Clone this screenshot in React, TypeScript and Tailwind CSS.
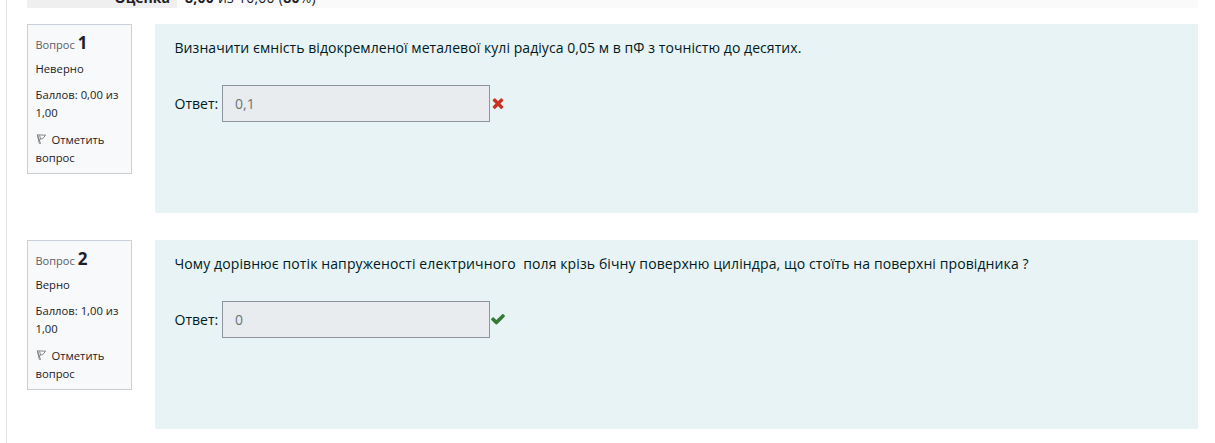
type Question = {
  number: number;
  state: string;
  grade: string;
  text: string;
  tracking: string;
  answer: string;
  correct: boolean;
};

const questions: Question[] = [
  {
    number: 1,
    state: "Неверно",
    grade: "0,00",
    text: "Визначити ємність відокремленої металевої кулі радіуса 0,05 м в пФ з точністю до десятих.",
    tracking: "tracking-[0.06px]",
    answer: "0,1",
    correct: false,
  },
  {
    number: 2,
    state: "Верно",
    grade: "1,00",
    text: "Чому дорівнює потік напруженості електричного\u00a0 поля крізь бічну поверхню циліндра, що стоїть на поверхні провідника ?",
    tracking: "tracking-[0.1px]",
    answer: "0",
    correct: true,
  },
];

function CheckIcon() {
  return (
    <svg viewBox="0 0 1792 1792" className="-mt-px size-4 shrink-0 fill-[#357a32]">
      <path d="M1671 566q0 40-28 68l-724 724-136 136q-28 28-68 28t-68-28l-136-136-362-362q-28-28-28-68t28-68l136-136q28-28 68-28t68 28l294 295 656-657q28-28 68-28t68 28l136 136q28 28 28 68z" />
    </svg>
  );
}

function CrossIcon() {
  return (
    <svg viewBox="0 0 1792 1792" className="-mt-px size-4 shrink-0 fill-[#ca3120]">
      <path d="M1490 1322q0 40-28 68l-136 136q-28 28-68 28t-68-28l-294-294-294 294q-28 28-68 28t-68-28l-136-136q-28-28-28-68t28-68l294-294-294-294q-28-28-28-68t28-68l136-136q28-28 68-28t68 28l294 294 294-294q28-28 68-28t68 28l136 136q28 28 28 68t-28 68l-294 294 294 294q28 28 28 68z" />
    </svg>
  );
}

function FlagIcon() {
  return (
    <svg
      viewBox="0 0 12 12"
      className="mr-1 inline-block size-3 align-[-1px] fill-none stroke-[#777]"
      strokeWidth="0.9"
    >
      <path d="M1.4 1.8 4.6 10.8M3.4 10.8 1.4 1.8 9.6 2.2 6.8 5.6 3.2 6.4M3.6 2.4 4.6 5.8" />
    </svg>
  );
}

function QuestionRow({ q }: { q: Question }) {
  return (
    <div className="flex h-[189px] items-start gap-[23px]">
      <div className="h-[150px] w-[105px] shrink-0 border border-[#cad0d7] bg-[#f8f9fa] pt-[7px] pr-2 pl-[7.5px] text-[11.25px] leading-[18px] text-[#1d2125]">
        <h3 className="flex h-6 items-baseline gap-[3px] whitespace-nowrap text-[11px] leading-[22px] text-[#5a6168]">
          <span>Вопрос</span>
          <span className="text-[17px] font-bold text-[#1d2125]">{q.number}</span>
        </h3>
        <div className="mt-1">{q.state}</div>
        <div className="mt-2">
          Баллов: {q.grade} из
          <br />
          1,00
        </div>
        <div className="mt-[9px]">
          <FlagIcon />
          Отметить
          <br />
          вопрос
        </div>
      </div>
      <div className="h-full flex-1 bg-[#e7f3f5] pt-3 pr-5 pl-[19.5px] text-[14px] text-[#001a1e]">
        <p className={`h-6 whitespace-pre leading-6 ${q.tracking}`}>{q.text}</p>
        <div className="mt-[25px] flex h-[37px] items-center">
          <label className="w-[47.5px] whitespace-nowrap">Ответ:</label>
          <div className="flex h-[37px] w-[268px] items-center border border-[#8f959e] bg-[#e9ecef] px-3 text-[#6a737b]">
            {q.answer}
          </div>
          {q.correct ? <CheckIcon /> : <CrossIcon />}
        </div>
      </div>
    </div>
  );
}

export default function App() {
  return (
    <div className="h-[443px] overflow-hidden bg-white pl-1.5 font-['Open_Sans',sans-serif]">
      <div className="h-full border-l border-[#dee2e6] pr-[17px] pl-5">
        <div className="flex h-2 items-end text-[14px] leading-5 text-[#1d2125]">
          <div className="flex h-2 w-[150px] items-end justify-end bg-[#efefef] pr-[7px] font-bold">
            <span>Оценка</span>
          </div>
          <div className="flex h-2 flex-1 items-end bg-[#fafafa] pl-2">
            <span className="whitespace-nowrap tracking-[0.25px]">
              <b>8,00</b> из 10,00 (<b>80</b>%)
            </span>
          </div>
        </div>
        <div className="mt-4 flex flex-col gap-[27px]">
          {questions.map((q) => (
            <QuestionRow key={q.number} q={q} />
          ))}
        </div>
      </div>
    </div>
  );
}
